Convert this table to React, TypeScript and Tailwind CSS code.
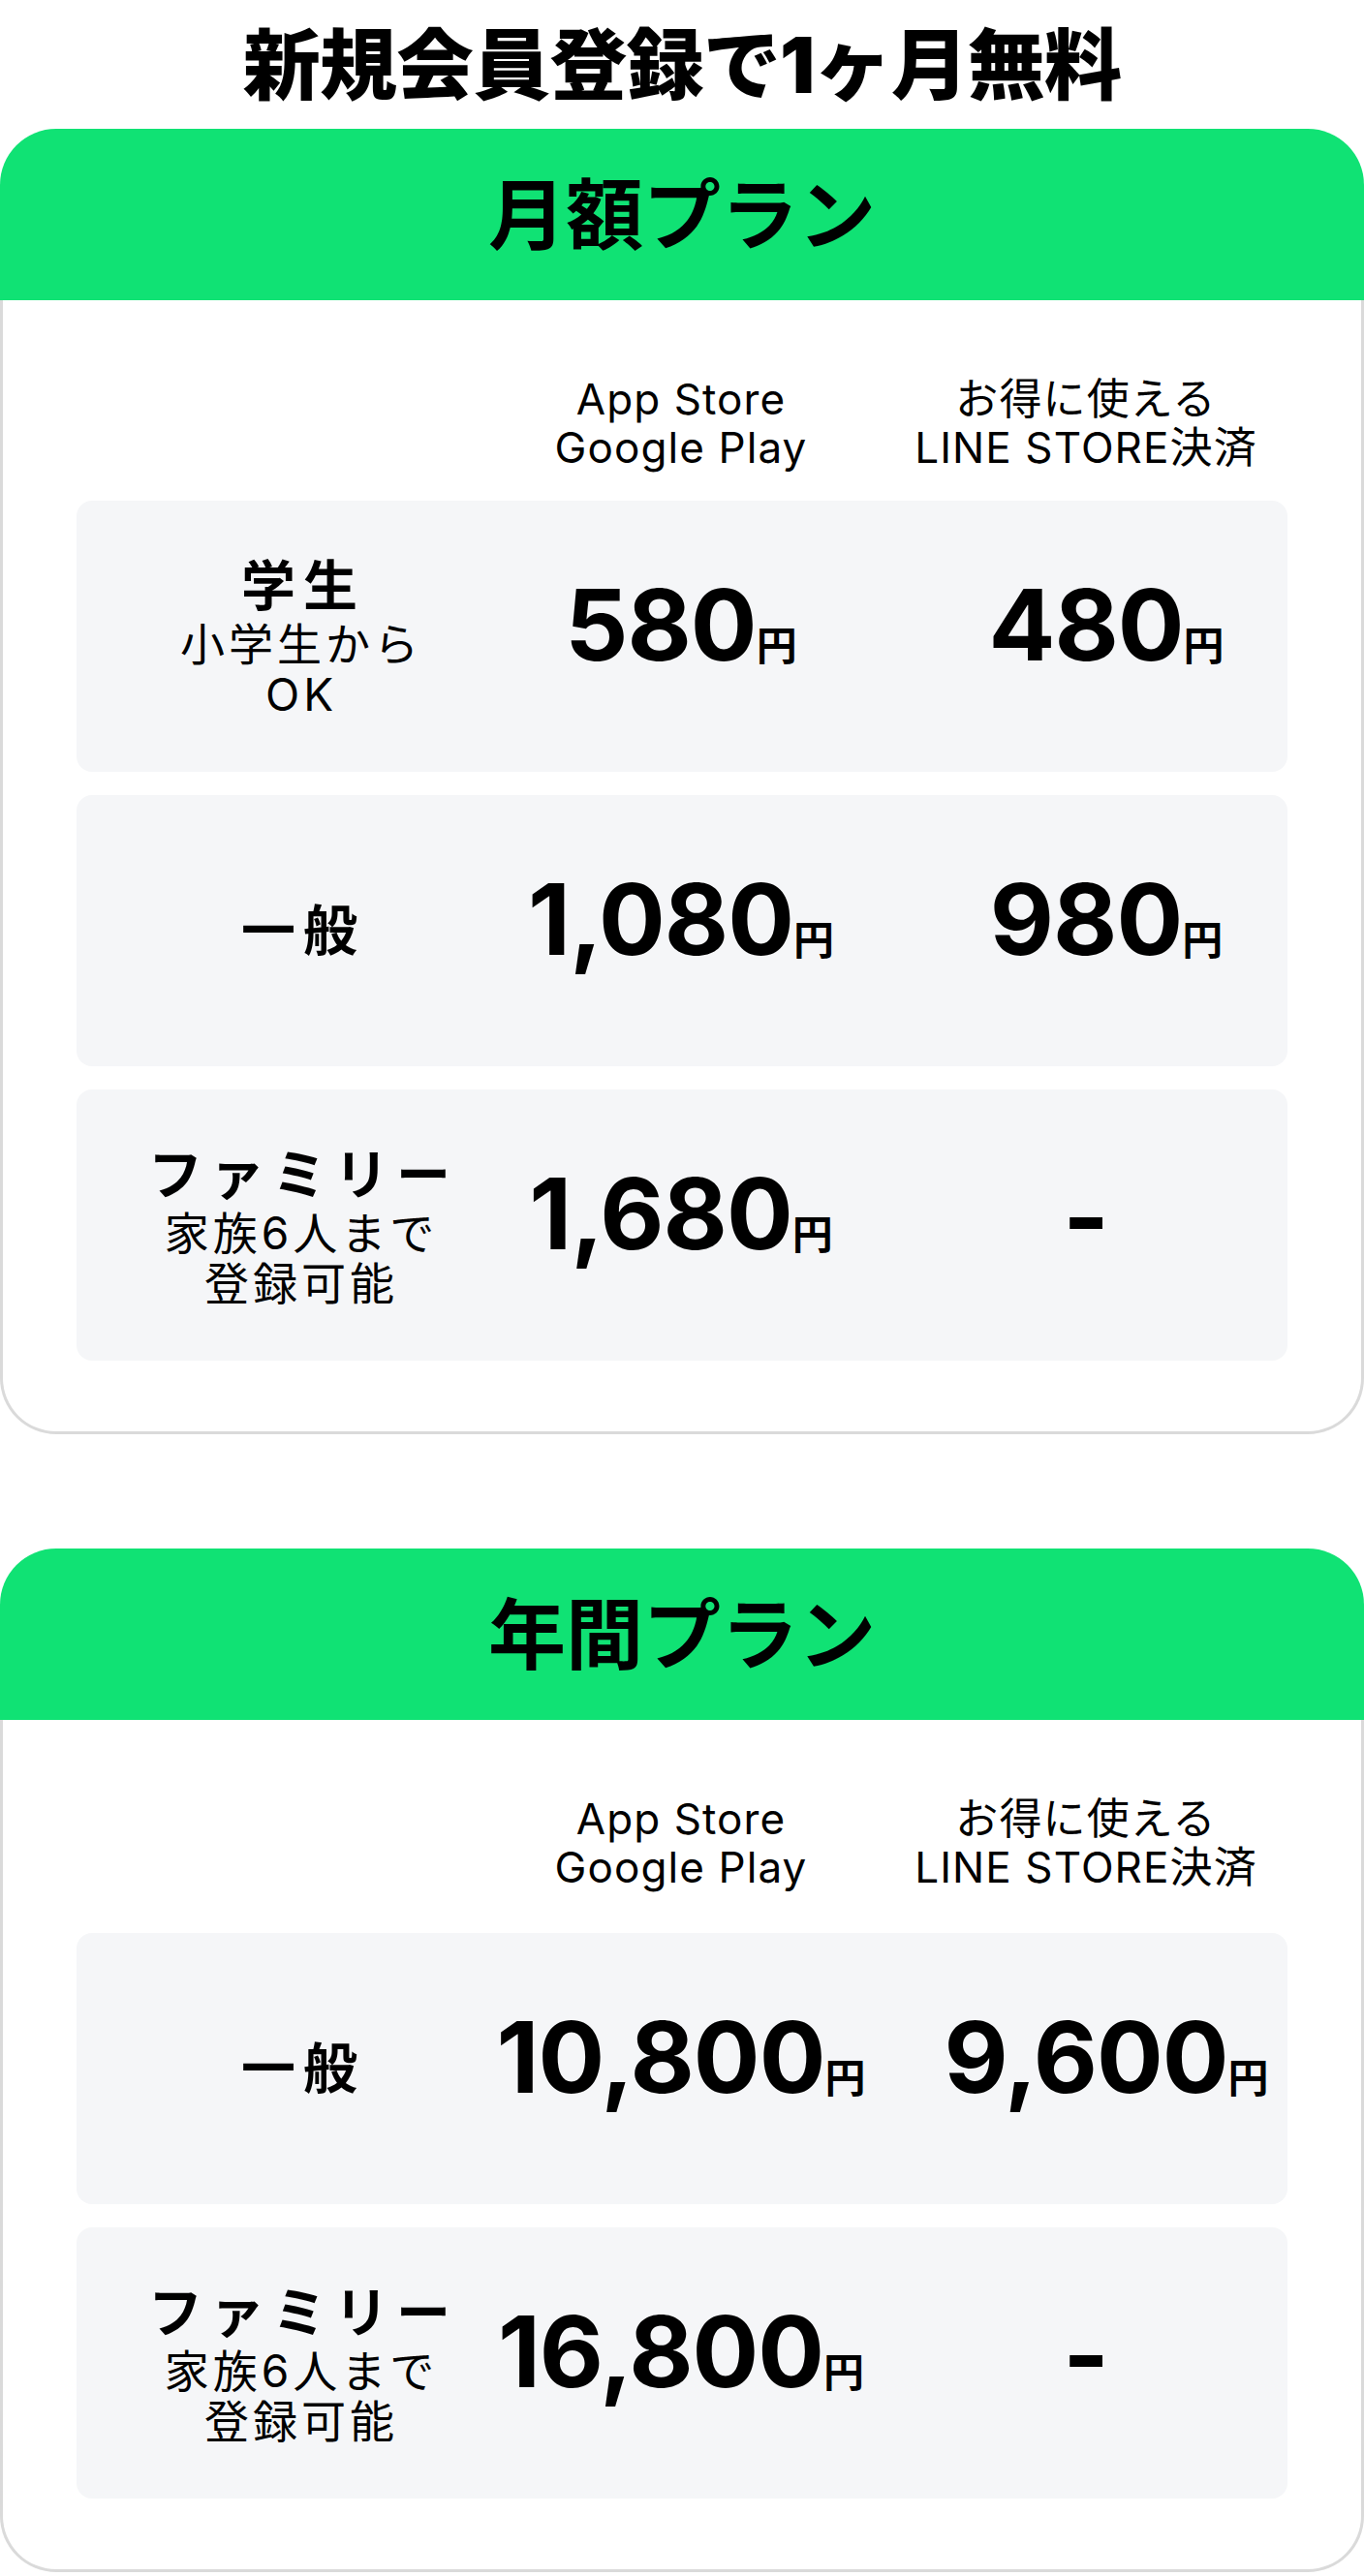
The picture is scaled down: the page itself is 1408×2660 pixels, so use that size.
import React from 'react';

type Row = {
  label: string;
  sub?: string[];
  store: string;
  line: string | null;
};

const monthly: Row[] = [
  { label: '学生', sub: ['小学生から', 'OK'], store: '580', line: '480' },
  { label: '一般', store: '1,080', line: '980' },
  { label: 'ファミリー', sub: ['家族6人まで', '登録可能'], store: '1,680', line: null },
];

const yearly: Row[] = [
  { label: '一般', store: '10,800', line: '9,600' },
  { label: 'ファミリー', sub: ['家族6人まで', '登録可能'], store: '16,800', line: null },
];

const Price = ({ value, className }: { value: string; className?: string }) => (
  <div className={`flex items-baseline justify-center pb-6 ${className ?? ''}`}>
    <span className="text-[102px] font-bold leading-none tracking-[-0.01em]">{value}</span>
    <span className="text-[42px] font-bold leading-none">円</span>
  </div>
);

const PlanCard = ({ title, rows, rowsGap }: { title: string; rows: Row[]; rowsGap: string }) => (
  <section>
    {/* 見出し */}
    <div className="h-[177px] rounded-t-[58px] bg-[#10e274] flex items-center justify-center">
      <h2 className="text-[80px] font-bold leading-none">{title}</h2>
    </div>

    <div className="border-x-[3px] border-b-[3px] border-[#dadada] rounded-b-[58px] px-[76px] pt-[77px] pb-[73px]">
      {/* 列ヘッダー */}
      <div className="grid grid-cols-[460px_328px_462px] text-[44px] leading-[50px] tracking-[0.025em] text-center">
        <div />
        <div className="flex flex-col">
          <span>App Store</span>
          <span>Google Play</span>
        </div>
        <div className="flex flex-col pl-[46px]">
          <span>お得に使える</span>
          <span>LINE STORE決済</span>
        </div>
      </div>

      <div className={`flex flex-col gap-6 ${rowsGap}`}>
        {rows.map((r) => (
          <div
            key={r.label}
            className="grid grid-cols-[460px_328px_462px] items-center h-[280px] rounded-[16px] bg-[#f5f6f8]"
          >
            <div className="flex flex-col items-center text-center">
              <div className="text-[56px] font-bold leading-[68px] tracking-[8px] pl-[8px]">{r.label}</div>
              {r.sub?.map((s) => (
                <div key={s} className="text-[46px] leading-[52px] tracking-[4px] pl-[4px]">
                  {s}
                </div>
              ))}
            </div>
            <Price value={r.store} />
            {r.line ? (
              <Price value={r.line} className="pl-[88px]" />
            ) : (
              <div className="pl-[46px] pb-4 text-center text-[102px] font-bold leading-none">-</div>
            )}
          </div>
        ))}
      </div>
    </div>
  </section>
);

export default function App() {
  return (
    <div className="w-[1408px] bg-white text-black font-['Inter','Noto_Sans_CJK_JP',sans-serif]">
      <div className="h-[133px] flex items-center justify-center">
        <h1 className="text-[80px] font-black leading-none tracking-[-0.01em]">新規会員登録で1ヶ月無料</h1>
      </div>

      <PlanCard title="月額プラン" rows={monthly} rowsGap="mt-[30px]" />

      <div className="mt-[118px]">
        <PlanCard title="年間プラン" rows={yearly} rowsGap="mt-[43px]" />
      </div>
    </div>
  );
}
